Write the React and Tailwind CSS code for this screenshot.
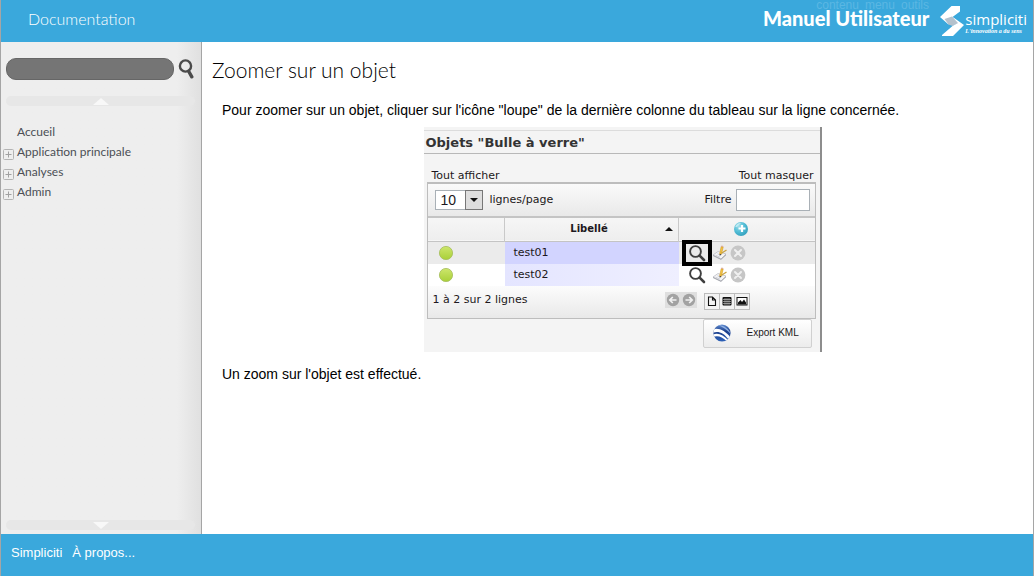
import React from "react";

function Magnifier({ className }) {
  return (
    <svg viewBox="0 0 18 20" className={className} fill="none" stroke="#4a4a4a" aria-hidden="true">
      <circle cx="7.5" cy="7" r="5.6" strokeWidth="2.4" />
      <path d="M10.8 12.5 L13.8 17.8" strokeWidth="3.4" strokeLinecap="round" />
    </svg>
  );
}

function RowMagnifier() {
  return (
    <svg viewBox="0 0 18 18" className="size-[18px]" fill="none" stroke="#3f3f3f" aria-hidden="true">
      <circle cx="7.5" cy="7.5" r="5.4" strokeWidth="1.9" />
      <path d="M11.6 11.6 L16 16" strokeWidth="2.6" strokeLinecap="round" />
    </svg>
  );
}

function EditIcon() {
  return (
    <svg viewBox="0 0 16 16" className="size-4" aria-hidden="true">
      <path d="M1 10 L6 6.5 L14 9 L9 14 Z" fill="#f4f4f6" stroke="#b3b5bd" strokeWidth="0.7" />
      <path d="M1 10.5 L9 14.4 L14 9.8" fill="none" stroke="#9c9ea6" strokeWidth="0.9" />
      <path d="M3.5 10.2 L8 12.2 M5.5 8.8 L9 10.3" stroke="#c3c5cd" strokeWidth="0.8" />
      <path d="M7.6 9 L9.2 1.6 L11.2 2.1 L9.5 9.2 Z" fill="#f3c443" stroke="#c98f1d" strokeWidth="0.5" />
      <path d="M9.2 1.6 L9.5 0.5 L11.4 1 L11.2 2.1 Z" fill="#d9a49a" />
      <path d="M9.5 8.2 L14.5 5" stroke="#c7a243" strokeWidth="1.3" />
      <path d="M7.6 9 L7.8 10.8 L9.5 9.2 Z" fill="#333" />
    </svg>
  );
}

function DeleteIcon() {
  return (
    <svg viewBox="0 0 16 16" className="size-4" aria-hidden="true">
      <circle cx="8" cy="8" r="7.4" fill="#c6c6c6" />
      <path d="M5 5 L11 11 M11 5 L5 11" stroke="#efefef" strokeWidth="2" strokeLinecap="round" />
    </svg>
  );
}

function AddIcon() {
  return (
    <svg viewBox="0 0 16 16" className="size-4" aria-hidden="true">
      <defs>
        <radialGradient id="add" cx="0.35" cy="0.3" r="0.8">
          <stop offset="0" stopColor="#9fdde9" />
          <stop offset="0.5" stopColor="#52bdd6" />
          <stop offset="1" stopColor="#2f9bb9" />
        </radialGradient>
      </defs>
      <circle cx="8" cy="8" r="7" fill="url(#add)" />
      <path d="M2.2 6 C3 3 6 1.600 8 2 L4 6 Z" fill="#d7f3f8" opacity="0.7" />
      <path d="M9 4 V11 M5.500 7.500 H12.500" stroke="#fff" strokeWidth="2.200" />
    </svg>
  );
}

function Ball() {
  return (
    <svg viewBox="0 0 16 16" className="block size-4" aria-hidden="true">
      <defs>
        <linearGradient id="ball" x1="0" y1="0" x2="0" y2="1">
          <stop offset="0" stopColor="#cde66c" />
          <stop offset="1" stopColor="#a9d038" />
        </linearGradient>
      </defs>
      <circle cx="8" cy="8" r="6.600" fill="url(#ball)" stroke="#a5bd5a" strokeWidth="0.800" />
    </svg>
  );
}

function PageArrow({ next }) {
  return (
    <svg viewBox="0 0 16 16" className="size-4" aria-hidden="true">
      <circle cx="8" cy="8" r="6.200" fill="#a2a2a2" />
      <path
        d={next ? "M4.500 8 H11 M8.200 5 L11.200 8 L8.200 11" : "M11.500 8 H5 M7.800 5 L4.800 8 L7.800 11"}
        fill="none"
        stroke="#f1f1f1"
        strokeWidth="1.700"
      />
    </svg>
  );
}

function GlobeIcon() {
  return (
    <svg viewBox="0 0 20 20" className="size-5 shrink-0" aria-hidden="true">
      <defs>
        <clipPath id="disc">
          <circle cx="10" cy="10" r="8.600" />
        </clipPath>
        <linearGradient id="sea" x1="0" y1="0" x2="0" y2="1">
          <stop offset="0" stopColor="#5f8bd0" />
          <stop offset="0.4" stopColor="#1c3f8c" />
          <stop offset="1" stopColor="#2e62b8" />
        </linearGradient>
      </defs>
      <circle cx="10" cy="10" r="8.600" fill="url(#sea)" />
      <g clipPath="url(#disc)" fill="#fff">
        <path d="M0 7 C5 4 13 7 19 15 L17 17 C11 9 6 8 0 10 Z" />
        <path d="M0 12 C6 9 11 12 16 17 L14.500 18 C10 14 6 12 1 14 Z" />
        <path d="M6 2 C12 2 17 6 19 11 C15 7 11 4 6 2 Z" fill="#8fb0e2" />
      </g>
    </svg>
  );
}

function Logo() {
  return (
    <a href="#simpliciti" className="flex items-center text-white" aria-label="simpliciti">
      <svg viewBox="0 0 25 32" className="h-8 w-[25px]" aria-hidden="true">
        <path d="M11.500 1 H20 V6.500 L10.500 13.500 L8.500 19.500 L0 12 Z" fill="#fff" />
        <path d="M4.500 14 L12 11.500 L19 18 L12.500 21 L8.500 19.500 Z" fill="#b4c1cc" />
        <path d="M12 11.500 L24 20 L13 31 H2 V30 L12.500 21 L18 18 Z" fill="#fff" />
      </svg>
      <span className="flex flex-col pt-1">
        <span className="font-['Open_Sans','Noto_Sans',sans-serif] text-[15px] leading-4">simpliciti</span>
        <span className="font-['Liberation_Serif',serif] text-[6px] leading-[8px] font-bold italic">L'innovation a du sens</span>
      </span>
    </a>
  );
}

const menu = [
  { label: "Accueil" },
  { label: "Application principale", open: true },
  { label: "Analyses", open: true },
  { label: "Admin", open: true },
];

function ScrollBar({ down }) {
  return (
    <button
      type="button"
      aria-label={down ? "Descendre" : "Monter"}
      className="flex h-[10px] w-full items-center justify-center rounded-full bg-[#e7e7e7]"
    >
      <svg viewBox="0 0 16 8" className="h-2 w-4" aria-hidden="true">
        <path d={down ? "M0 1 H16 L8 8 Z" : "M0 8 H16 L8 1 Z"} fill="#f8f8f8" />
      </svg>
    </button>
  );
}

function Sidebar() {
  return (
    <nav className="flex w-[201px] shrink-0 flex-col border-r border-[#a5a5a5] bg-linear-to-r from-[#eeeeee] from-88% to-[#e0e0e0] pr-[6px] pb-1 pl-[5px]">
      <form className="flex items-center gap-1 pt-4" onSubmit={(e) => e.preventDefault()}>
        <input
          type="text"
          aria-label="Rechercher"
          className="h-[22px] w-[168px] rounded-[10px] border border-[#666] bg-[#757575] px-2 text-xs text-white"
        />
        <button type="submit" aria-label="Lancer la recherche">
          <Magnifier className="h-5 w-[18px]" />
        </button>
      </form>
      <div className="pt-4">
        <ScrollBar />
      </div>
      <ul className="flex-1 pt-4 font-[Lato,sans-serif] text-xs leading-5 text-[#4b4f55]">
        {menu.map((m) => (
          <li key={m.label} className="flex h-5 items-center">
            <span className="-ml-[3px] flex w-[11px] shrink-0 pt-1">
              {m.open && (
                <svg viewBox="0 0 11 11" className="size-[11px]" fill="none" aria-hidden="true">
                  <rect x="0.5" y="0.5" width="10" height="10" rx="1" stroke="#b3b3b3" />
                  <path d="M5.5 2.500 V8.500 M2.500 5.500 H8.500" stroke="#a0a0a0" />
                </svg>
              )}
            </span>
            <a href="#page" className="pl-[3px]">{m.label}</a>
          </li>
        ))}
      </ul>
      <ScrollBar down />
    </nav>
  );
}

const rows = [
  { name: "test01", bg: "bg-[#ebebeb]", cell: "bg-[#d2d4ff]", ring: "border-black" },
  { name: "test02", bg: "bg-white", cell: "bg-linear-to-r from-[#e4e5ff] to-[#efefff]", ring: "border-transparent" },
];

function ObjectPanel() {
  return (
    <section className="mx-auto w-[398px] border-r-2 border-[#8d8d8d] bg-[#f4f4f4] pt-[3px] pb-1 font-['DejaVu_Sans',Verdana,sans-serif] text-[10px] text-[#1c1820]">
      <h2 className="h-6 border-t border-b border-t-[#dcdcdc] border-b-[#b8b8b8] pl-[2px] text-[13px] leading-6 font-bold text-[#333]">
        Objets "Bulle à verre"
      </h2>
      <div className="flex justify-between pt-4 pr-[6px] pl-2 text-[11px] leading-3">
        <a href="#show">Tout afficher</a>
        <a href="#hide">Tout masquer</a>
      </div>
      <div className="mr-1 ml-[3px] border border-t-2 border-[#bdbdbd]">
        <div className="flex h-[34px] items-center justify-between border-b-2 border-[#c4c4c4] bg-linear-to-b from-[#fafafa] to-[#e9e9e9] pr-[5px] pl-[7px]">
          <label className="flex items-center gap-[7px] text-[11px]">
            <span className="relative flex">
              <select className="h-5 w-12 appearance-none border border-[#a9b0b6] bg-white pl-[5px] font-['Liberation_Sans',Arial,sans-serif] text-sm leading-4">
                <option>10</option>
              </select>
              <span className="pointer-events-none absolute top-0 right-0 flex h-5 w-[18px] items-center justify-center border border-[#777] bg-[#dedede]">
                <svg viewBox="0 0 8 4" className="h-1 w-2" aria-hidden="true">
                  <path d="M0 0 H8 L4 4 Z" fill="#111" />
                </svg>
              </span>
            </span>
            lignes/page
          </label>
          <label className="flex items-center gap-1 text-[11px]">
            Filtre
            <input type="text" className="h-[22px] w-[74px] border border-[#a9b0b6] bg-white px-1" />
          </label>
        </div>
        <table className="w-full table-fixed border-collapse">
          <colgroup>
            <col className="w-[77px]" />
            <col className="w-[174px]" />
            <col />
          </colgroup>
          <thead>
            <tr className="h-[23px] border-b border-[#c4c4c4] bg-linear-to-b from-[#f6f6f6] to-[#eeeeee]">
              <th className="border-r border-[#c9c9c9] p-0" aria-label="État" />
              <th className="border-r border-[#c9c9c9] p-0">
                <button type="button" className="flex w-full items-center pr-[5px] pl-2 text-[10px] font-bold">
                  <span className="flex-1">Libellé</span>
                  <svg viewBox="0 0 8 4" className="h-1 w-2" aria-hidden="true">
                    <path d="M0 4 H8 L4 0 Z" fill="#111" />
                  </svg>
                </button>
              </th>
              <th className="p-0">
                <button type="button" aria-label="Ajouter" className="flex w-full justify-center pr-3">
                  <AddIcon />
                </button>
              </th>
            </tr>
          </thead>
          <tbody>
            {rows.map((r) => (
              <tr key={r.name} className={`h-[22px] ${r.bg}`}>
                <td className="p-0 pl-[10px]"><Ball /></td>
                <td className={`p-0 pl-[9px] text-[11px] leading-4 ${r.cell}`}>{r.name}</td>
                <td className="p-0">
                  <div className="flex h-[22px] items-center pl-[3px]">
                    <button type="button" aria-label="Zoomer" className={`-my-1 flex h-[26px] w-[30px] shrink-0 items-center justify-center border-4 ${r.ring}`}>
                      <RowMagnifier />
                    </button>
                    <button type="button" aria-label="Modifier"><EditIcon /></button>
                    <button type="button" aria-label="Supprimer" className="pl-[2px]"><DeleteIcon /></button>
                  </div>
                </td>
              </tr>
            ))}
          </tbody>
        </table>
        <div className="flex h-8 items-center justify-between bg-linear-to-b from-[#fcfcfc] to-[#e9e9e9] pr-[65px] pb-[3px] pl-[5px] text-[11px]">
          <span>1 à 2 sur 2 lignes</span>
          <span className="flex items-center gap-[7px]">
            <span className="flex bg-[#dfdfdf]">
              <button type="button" aria-label="Page précédente"><PageArrow /></button>
              <button type="button" aria-label="Page suivante"><PageArrow next /></button>
            </span>
            <span className="mt-[2px] flex h-[17px] divide-x divide-[#bcbcbc] border border-[#bcbcbc] bg-[#f3f3f3]">
              <button type="button" aria-label="Document" className="flex w-[15px] items-center justify-center">
                <svg viewBox="0 0 10 10" className="size-[10px]" fill="none" stroke="#111" aria-hidden="true">
                  <path d="M1.500 1 H5.500 L8.500 4 V9.500 H1.500 Z M5.500 1 V4 H8.500" strokeWidth="1.100" />
                </svg>
              </button>
              <button type="button" aria-label="Tableur" className="flex w-[15px] items-center justify-center">
                <svg viewBox="0 0 10 10" className="size-[10px]" aria-hidden="true">
                  <rect x="0.500" y="1" width="9" height="8.500" rx="1" fill="#111" />
                  <path d="M1 3.500 H9 M1 5.500 H9 M1 7.500 H9 M3 2 V9 M5 2 V9 M7 2 V9" stroke="#ccc" strokeWidth="0.600" />
                </svg>
              </button>
              <button type="button" aria-label="Image" className="flex w-[14px] items-center justify-center">
                <svg viewBox="0 0 12 10" className="h-[10px] w-3" aria-hidden="true">
                  <rect x="1" y="1.500" width="10" height="7.500" fill="#fff" stroke="#111" />
                  <path d="M2 8.500 V6.500 L4.500 4 L6 6 L8 3.500 L10 6.500 V8.500 Z" fill="#111" />
                </svg>
              </button>
            </span>
          </span>
        </div>
      </div>
      <button
        type="button"
        className="mr-2 ml-auto flex h-[29px] w-[109px] items-center gap-[15px] rounded-xs border border-[#d0d0d0] bg-linear-to-b from-white to-[#ececec] pl-2 font-['Liberation_Sans',Arial,sans-serif] text-[10px]"
      >
        <GlobeIcon />
        Export KML
      </button>
    </section>
  );
}

export default function App() {
  return (
    <div className="flex min-h-screen flex-col border-r border-l border-[#a5a5a5] bg-white font-['Liberation_Sans',Arial,sans-serif] text-black">
      <header className="relative flex h-[42px] items-center justify-between bg-[#3aa8dc] pr-[6px] pl-[27px] font-[Lato,sans-serif] text-white">
        <p className="pb-1 text-base font-light">Documentation</p>
        <div className="absolute -top-px right-[104px] flex gap-[6px] font-['Liberation_Sans',Arial,sans-serif] text-xs leading-3 text-[#5ab7e3]">
          <a href="#contenu">contenu</a>
          <a href="#menu">menu</a>
          <a href="#outils">outils</a>
        </div>
        <div className="relative flex items-center gap-[11px]">
          <h1 className="pb-[6px] text-xl leading-6 font-black">Manuel Utilisateur</h1>
          <Logo />
        </div>
      </header>
      <div className="flex flex-1">
        <Sidebar />
        <main id="contenu" className="min-w-0 flex-1 pt-4 pr-[10px] pl-[10px]">
          <h2 className="font-[Lato,sans-serif] text-[21px] leading-6 font-light">Zoomer sur un objet</h2>
          <div className="pl-[10px] text-sm leading-5">
            <p className="pt-[18px] pb-[7px]">
              Pour zoomer sur un objet, cliquer sur l'icône "loupe" de la dernière colonne du tableau sur la ligne concernée.
            </p>
            <ObjectPanel />
            <p className="pt-3">Un zoom sur l'objet est effectué.</p>
          </div>
        </main>
      </div>
      <footer className="flex h-[42px] gap-[10px] bg-[#3aa8dc] px-[10px] pt-[9px] text-[13px] leading-5 text-white">
        <a href="#simpliciti">Simpliciti</a>
        <a href="#apropos">À propos...</a>
      </footer>
    </div>
  );
}
